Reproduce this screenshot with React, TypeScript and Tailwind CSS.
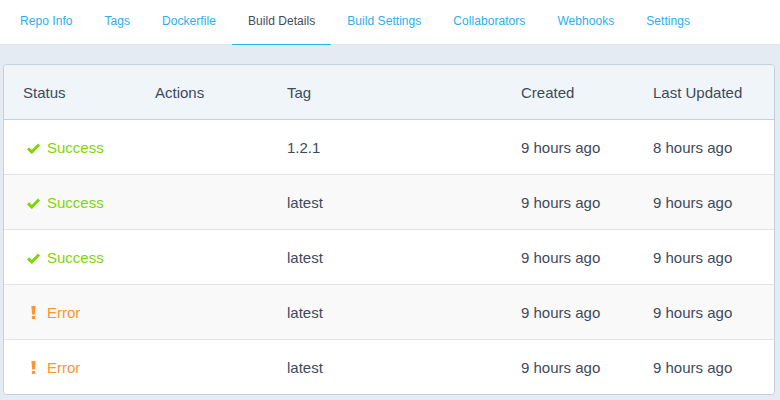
const tabs = ['Repo Info', 'Tags', 'Dockerfile', 'Build Details', 'Build Settings', 'Collaborators', 'Webhooks', 'Settings']

const builds = [
  { ok: true, tag: '1.2.1', created: '9 hours ago', updated: '8 hours ago' },
  { ok: true, tag: 'latest', created: '9 hours ago', updated: '9 hours ago' },
  { ok: true, tag: 'latest', created: '9 hours ago', updated: '9 hours ago' },
  { ok: false, tag: 'latest', created: '9 hours ago', updated: '9 hours ago' },
  { ok: false, tag: 'latest', created: '9 hours ago', updated: '9 hours ago' },
]

const row = 'grid grid-cols-[132px_132px_234px_132px_1fr] items-center pl-[19px] pt-[2px]'

function Check() {
  return (
    <svg width="13" height="11" viewBox="0 0 13 11" className="ml-[4px] mr-[7px]">
      <path d="M1 5.4 L4.8 9 L12 1.6" fill="none" stroke="#7fd605" strokeWidth="3" />
    </svg>
  )
}

function Bang() {
  return (
    <svg width="13" height="13" viewBox="0 0 13 13" className="ml-[4px] mr-[7px] -translate-y-[1px]">
      <path d="M4.4 0 H8.6 L7.9 8.6 H5.1 Z" fill="#ff9433" />
      <rect x="4.9" y="10" width="3.2" height="3" fill="#ff9433" />
    </svg>
  )
}

export default function App() {
  return (
    <div className="w-[780px] h-[400px] overflow-hidden bg-[#e5ebf3] font-['Liberation_Sans',Arial,sans-serif] text-[#3d4a5c]">
      <nav className="flex h-[45px] bg-white pl-1 border-b border-[#dfe6ee] text-[12px] tracking-[0.05px]">
        {tabs.map((t) =>
          t === 'Build Details' ? (
            <a key={t} className="h-[45px] px-4 leading-[43px] text-[#444c58] border-b-[1px] border-[#22b8eb]">{t}</a>
          ) : (
            <a key={t} className="h-[44px] px-4 leading-[43px] text-[#2aaef2]">{t}</a>
          )
        )}
      </nav>

      <div className="mx-[3px] mt-[19px] w-[772px] rounded-[4px] border border-[#c5d0dd] overflow-hidden text-[15px]">
        <div className={`${row} h-[55px] bg-[#f0f5fa] border-b border-[#c5d0dd]`}>
          <div>Status</div>
          <div>Actions</div>
          <div>Tag</div>
          <div>Created</div>
          <div>Last Updated</div>
        </div>
        {builds.map((b, i) => (
          <div
            key={i}
            className={`${row} ${i % 2 ? 'bg-[#f9f9f9]' : 'bg-white'} ${i < builds.length - 1 ? 'h-[55px] border-b border-[#e2e5e8]' : 'h-[54px]'}`}
          >
            <div className={`flex items-center ${b.ok ? 'text-[#7fd605]' : 'text-[#ff9433]'}`}>
              {b.ok ? <Check /> : <Bang />}
              {b.ok ? 'Success' : 'Error'}
            </div>
            <div />
            <div>{b.tag}</div>
            <div>{b.created}</div>
            <div>{b.updated}</div>
          </div>
        ))}
      </div>
    </div>
  )
}
